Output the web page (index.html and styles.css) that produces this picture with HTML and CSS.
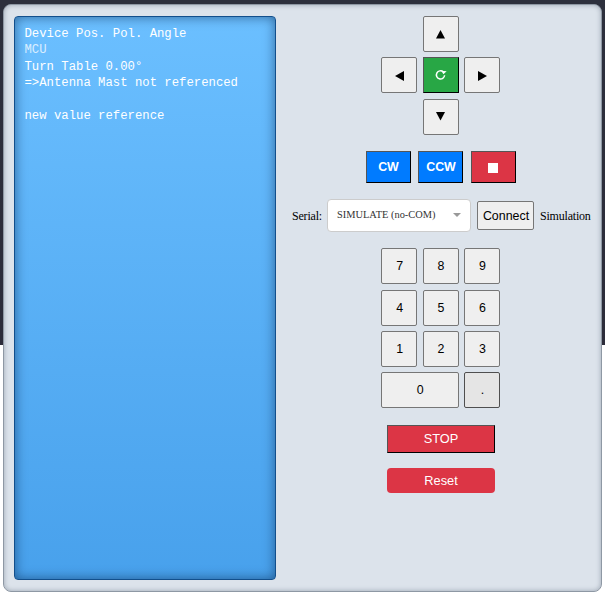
FILE: index.html
```
<!DOCTYPE html>
<html lang="en">
<head>
<meta charset="utf-8">
<title>Antenna Mast Control</title>
<link rel="stylesheet" href="styles.css">
</head>
<body>
<main class="panel">
  <section class="screen">
    <div>Device Pos. Pol. Angle</div>
    <div class="dim">MCU</div>
    <div>Turn Table 0.00°</div>
    <div>=&gt;Antenna Mast not referenced</div>
    <div>&nbsp;</div>
    <div>new value reference</div>
  </section>
  <section class="controls">
    <div class="grid arrows">
      <button class="key up"><svg width="9" height="9"><path d="M4.5 0L9 8.5H0Z"/></svg></button>
      <button class="key left"><svg width="9" height="10"><path d="M9 0V10L0 5Z"/></svg></button>
      <button class="key go"><svg width="12" height="12" fill="none" stroke="#fff" stroke-width="1.5"><path d="M8.2 2.8A4.1 4.1 0 1 0 9.6 6.3"/><path d="M6.3 1.7L11.6 2.2L8.4 5.2Z" fill="#fff" stroke="none"/></svg></button>
      <button class="key right"><svg width="9" height="10"><path d="M0 0V10L9 5Z"/></svg></button>
      <button class="key down"><svg width="9" height="9"><path d="M0 0H9L4.5 8.5Z"/></svg></button>
    </div>
    <div class="turn">
      <button class="rotate">CW</button>
      <button class="rotate">CCW</button>
      <button class="rotate halt"><span class="square"></span></button>
    </div>
    <div class="serial">
      <span class="label">Serial:</span>
      <div class="select"><span>SIMULATE (no-COM)</span><i class="caret"></i></div>
      <button class="connect">Connect</button>
      <span class="state">Simulation</span>
    </div>
    <div class="grid keypad">
      <button class="key">7</button><button class="key">8</button><button class="key">9</button>
      <button class="key">4</button><button class="key">5</button><button class="key">6</button>
      <button class="key">1</button><button class="key">2</button><button class="key">3</button>
      <button class="key zero">0</button><button class="key dot">.</button>
    </div>
    <button class="stop">STOP</button>
    <button class="reset">Reset</button>
  </section>
</main>
</body>
</html>
```
FILE: styles.css
```
* { box-sizing: border-box; }
html { background: #fff; }
body {
  margin: 0;
  height: 594px;
  padding: 4px 3px 2px;
  overflow: hidden;
  background: linear-gradient(#2d303d, #2c2c3a) 0 0 / 100% 345px no-repeat #fff;
  font-family: "Liberation Serif", serif;
}
.panel {
  display: flex;
  gap: 16px;
  width: 599px;
  height: 588px;
  padding: 11px 10px;
  border: 1px solid #8e98a4;
  border-radius: 8px;
  background: #dce3eb;
  box-shadow: inset 0 0 5px rgba(60, 75, 95, .4);
}
.screen {
  flex: none;
  width: 262px;
  height: 564px;
  padding: 9px 9.5px;
  border: 1px solid #124f8c;
  border-radius: 4px;
  background: linear-gradient(#6bbfff, #48a1ec);
  box-shadow: inset 0 0 12px rgba(0, 30, 65, .55);
  color: #fff;
  font: 12.27px/16.4px "Liberation Mono", monospace;
  white-space: nowrap;
}
.dim { opacity: .75; }
.controls {
  flex: none;
  display: flex;
  flex-direction: column;
  align-items: center;
  width: 297px;
}
button {
  flex: none;
  padding: 0 0 0 1px;
  border: 1px solid #767676;
  border-radius: 2px;
  background: #efefef;
  color: #000;
  font: 12.4px "Liberation Sans", sans-serif;
}
button svg { display: block; margin: auto; }
.grid {
  display: grid;
  grid-template-columns: repeat(3, 36px);
  grid-auto-rows: 36px;
  gap: 5.4px;
}
.up, .down { grid-column: 2; padding-left: 0; }
.left { grid-column: 1; }
.left, .right { padding-top: 1px; }
.go {
  padding: 0;
  border: 1px solid;
  border-color: #555 #000 #000 #555;
  border-radius: 0;
  background: #28a745;
}
.turn { display: flex; gap: 7.5px; margin: 16.2px 0 16px; }
.rotate {
  width: 45px;
  height: 32px;
  border-color: #555 #000 #000 #555;
  border-radius: 0;
  background: #007bff;
  color: #fff;
  font-size: 12.4px;
  font-weight: bold;
}
.halt { padding: 0; background: #dc3545; }
.square { display: block; width: 10px; height: 10px; margin: 2px auto 0; background: #fff; }
.serial {
  display: flex;
  align-items: center;
  width: 299px;
  height: 33px;
  margin-right: -2px;
  font-size: 12px;
  white-space: nowrap;
}
.label, .state { flex: none; padding-top: 2px; letter-spacing: -.2px; }
.label { width: 35px; }
.select {
  flex: none;
  display: flex;
  justify-content: space-between;
  align-items: center;
  width: 144px;
  height: 33px;
  padding: 0 9px 2px;
  border: 1px solid #ccc;
  border-radius: 4px;
  background: #fff;
  color: #333;
  font-size: 10.4px;
}
.caret { margin-top: 2px; border: 4px solid transparent; border-top: 4px solid #999; border-bottom: 0; }
.connect { width: 57px; height: 29px; margin: 1px 6px 0; }
.keypad { margin: 16.2px 0; }
.zero { grid-column: span 2; }
.dot { border-color: #4f4f4f; background: #e5e5e5; }
.stop, .reset { width: 108px; color: #fff; background: #dc3545; font-size: 12.8px; }
.stop { height: 28px; border-color: #555 #000 #000 #555; border-radius: 0; }
.reset { height: 25px; margin-top: 15px; border: 0; border-radius: 4px; }
```
